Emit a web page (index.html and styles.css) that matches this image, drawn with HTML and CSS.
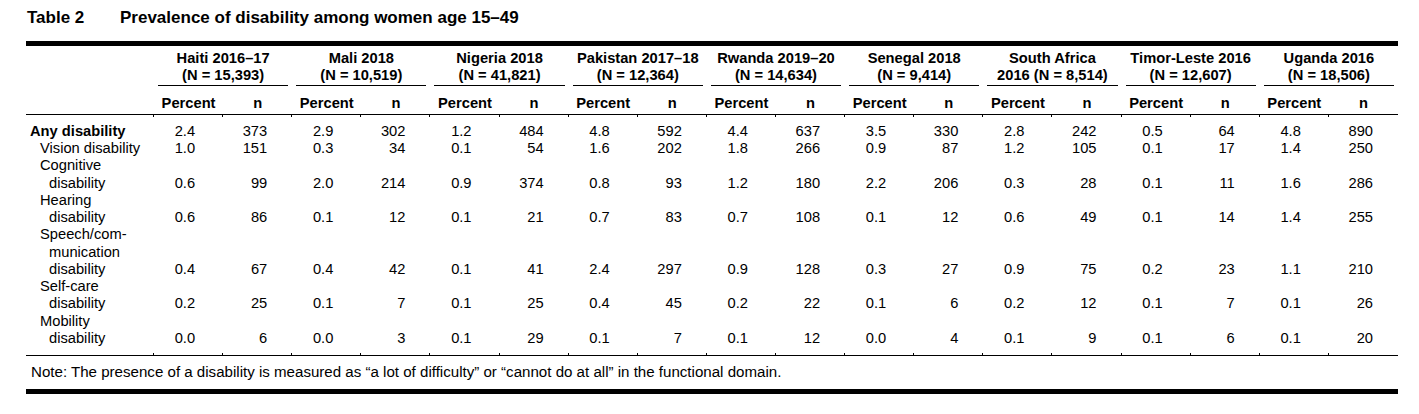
FILE: index.html
```html
<!DOCTYPE html>
<html lang="en">
<head>
<meta charset="utf-8">
<title>Table 2</title>
<link rel="stylesheet" href="styles.css">
</head>
<body>
<div class="page">
  <div class="title">
    <span class="t-num">Table 2</span>
    <span class="t-text">Prevalence of disability among women age 15–49</span>
  </div>
  <div class="rule-thick"></div>
  <table class="data">
    <colgroup>
      <col class="c-label">
      <col><col><col><col><col><col><col><col><col>
      <col><col><col><col><col><col><col><col><col>
    </colgroup>
    <thead>
      <tr class="grp">
        <th></th>
        <th colspan="2" class="g"><div>Haiti 2016–17<br>(N = 15,393)</div></th>
        <th colspan="2" class="g"><div>Mali 2018<br>(N = 10,519)</div></th>
        <th colspan="2" class="g"><div>Nigeria 2018<br>(N = 41,821)</div></th>
        <th colspan="2" class="g"><div>Pakistan 2017–18<br>(N = 12,364)</div></th>
        <th colspan="2" class="g"><div>Rwanda 2019–20<br>(N = 14,634)</div></th>
        <th colspan="2" class="g"><div>Senegal 2018<br>(N = 9,414)</div></th>
        <th colspan="2" class="g"><div>South Africa<br>2016 (N = 8,514)</div></th>
        <th colspan="2" class="g"><div>Timor-Leste 2016<br>(N = 12,607)</div></th>
        <th colspan="2" class="g"><div>Uganda 2016<br>(N = 18,506)</div></th>
      </tr>
      <tr class="subh">
        <th></th>
        <th>Percent</th><th>n</th>
        <th>Percent</th><th>n</th>
        <th>Percent</th><th>n</th>
        <th>Percent</th><th>n</th>
        <th>Percent</th><th>n</th>
        <th>Percent</th><th>n</th>
        <th>Percent</th><th>n</th>
        <th>Percent</th><th>n</th>
        <th>Percent</th><th>n</th>
      </tr>
    </thead>
    <tbody>
      <tr class="first">
        <th class="lab any">Any disability</th>
        <td class="p">2.4</td><td class="n">373</td>
        <td class="p">2.9</td><td class="n">302</td>
        <td class="p">1.2</td><td class="n">484</td>
        <td class="p">4.8</td><td class="n">592</td>
        <td class="p">4.4</td><td class="n">637</td>
        <td class="p">3.5</td><td class="n">330</td>
        <td class="p">2.8</td><td class="n">242</td>
        <td class="p">0.5</td><td class="n">64</td>
        <td class="p">4.8</td><td class="n">890</td>
      </tr>
      <tr>
        <th class="lab sub">Vision disability</th>
        <td class="p">1.0</td><td class="n">151</td>
        <td class="p">0.3</td><td class="n">34</td>
        <td class="p">0.1</td><td class="n">54</td>
        <td class="p">1.6</td><td class="n">202</td>
        <td class="p">1.8</td><td class="n">266</td>
        <td class="p">0.9</td><td class="n">87</td>
        <td class="p">1.2</td><td class="n">105</td>
        <td class="p">0.1</td><td class="n">17</td>
        <td class="p">1.4</td><td class="n">250</td>
      </tr>
      <tr>
        <th class="lab sub">Cognitive<br>disability</th>
        <td class="p">0.6</td><td class="n">99</td>
        <td class="p">2.0</td><td class="n">214</td>
        <td class="p">0.9</td><td class="n">374</td>
        <td class="p">0.8</td><td class="n">93</td>
        <td class="p">1.2</td><td class="n">180</td>
        <td class="p">2.2</td><td class="n">206</td>
        <td class="p">0.3</td><td class="n">28</td>
        <td class="p">0.1</td><td class="n">11</td>
        <td class="p">1.6</td><td class="n">286</td>
      </tr>
      <tr>
        <th class="lab sub">Hearing<br>disability</th>
        <td class="p">0.6</td><td class="n">86</td>
        <td class="p">0.1</td><td class="n">12</td>
        <td class="p">0.1</td><td class="n">21</td>
        <td class="p">0.7</td><td class="n">83</td>
        <td class="p">0.7</td><td class="n">108</td>
        <td class="p">0.1</td><td class="n">12</td>
        <td class="p">0.6</td><td class="n">49</td>
        <td class="p">0.1</td><td class="n">14</td>
        <td class="p">1.4</td><td class="n">255</td>
      </tr>
      <tr>
        <th class="lab sub">Speech/com-<br>munication<br>disability</th>
        <td class="p">0.4</td><td class="n">67</td>
        <td class="p">0.4</td><td class="n">42</td>
        <td class="p">0.1</td><td class="n">41</td>
        <td class="p">2.4</td><td class="n">297</td>
        <td class="p">0.9</td><td class="n">128</td>
        <td class="p">0.3</td><td class="n">27</td>
        <td class="p">0.9</td><td class="n">75</td>
        <td class="p">0.2</td><td class="n">23</td>
        <td class="p">1.1</td><td class="n">210</td>
      </tr>
      <tr>
        <th class="lab sub">Self-care<br>disability</th>
        <td class="p">0.2</td><td class="n">25</td>
        <td class="p">0.1</td><td class="n">7</td>
        <td class="p">0.1</td><td class="n">25</td>
        <td class="p">0.4</td><td class="n">45</td>
        <td class="p">0.2</td><td class="n">22</td>
        <td class="p">0.1</td><td class="n">6</td>
        <td class="p">0.2</td><td class="n">12</td>
        <td class="p">0.1</td><td class="n">7</td>
        <td class="p">0.1</td><td class="n">26</td>
      </tr>
      <tr class="last">
        <th class="lab sub">Mobility<br>disability</th>
        <td class="p">0.0</td><td class="n">6</td>
        <td class="p">0.0</td><td class="n">3</td>
        <td class="p">0.1</td><td class="n">29</td>
        <td class="p">0.1</td><td class="n">7</td>
        <td class="p">0.1</td><td class="n">12</td>
        <td class="p">0.0</td><td class="n">4</td>
        <td class="p">0.1</td><td class="n">9</td>
        <td class="p">0.1</td><td class="n">6</td>
        <td class="p">0.1</td><td class="n">20</td>
      </tr>
    </tbody>
  </table>
  <p class="note">Note: The presence of a disability is measured as “a lot of difficulty” or “cannot do at all” in the functional domain.</p>
  <div class="rule-thick"></div>
</div>
</body>
</html>
```
FILE: styles.css
```css
html, body {
  margin: 0;
  padding: 0;
  background: #ffffff;
}

body {
  font-family: "Liberation Sans", Arial, sans-serif;
  color: #000000;
}

.page {
  width: 1372px;
  padding: 8px 0 0 26px;
}

.title {
  display: flex;
  font-size: 17px;
  font-weight: bold;
  line-height: 20px;
  padding-left: 1px;
}

.t-num {
  width: 93px;
}

.rule-thick {
  height: 5px;
  background: #000000;
  margin-top: 13px;
}

.data {
  width: 1372px;
  border-collapse: collapse;
  table-layout: fixed;
}

.c-label {
  width: 128px;
}

.data th,
.data td {
  padding: 0;
  font-size: 14.7px;
  line-height: 17.27px;
  white-space: nowrap;
}

.grp th {
  padding-top: 4px;
  vertical-align: bottom;
  font-weight: bold;
  text-align: center;
}

.grp .g div {
  margin: 0 4px;
  border-bottom: 1px solid #000000;
}

.subh th {
  padding: 9px 0 2px;
  border-bottom: 1px solid #000000;
  font-weight: bold;
  text-align: center;
}

.data tbody th,
.data tbody td {
  vertical-align: bottom;
}

.lab {
  text-align: left;
  font-weight: normal;
}

.lab.any {
  font-weight: bold;
  padding-left: 4px;
}

.lab.sub {
  padding-left: 23px;
  text-indent: -9px;
}

.data td.p {
  text-align: right;
  padding-right: 28px;
}

.data td.n {
  text-align: right;
  padding-right: 25px;
}

.data tr.first th,
.data tr.first td {
  padding-top: 8px;
}

.data tr.last th,
.data tr.last td {
  padding-bottom: 8px;
  border-bottom: 1px solid #000000;
}

.data tr.first td,
.data tr.last td {
  position: relative;
}

.data tr.first td::before {
  content: "";
  position: absolute;
  left: -1px;
  top: 0;
  width: 1px;
  height: 2px;
  background: #000000;
}

.data tr.last td::after {
  content: "";
  position: absolute;
  left: -1px;
  bottom: 0;
  width: 1px;
  height: 2px;
  background: #000000;
}

.note {
  margin: 0;
  padding: 7px 0 8px 5px;
  font-size: 15.1px;
  line-height: 17.27px;
}

.note + .rule-thick {
  margin-top: 0;
}
```
